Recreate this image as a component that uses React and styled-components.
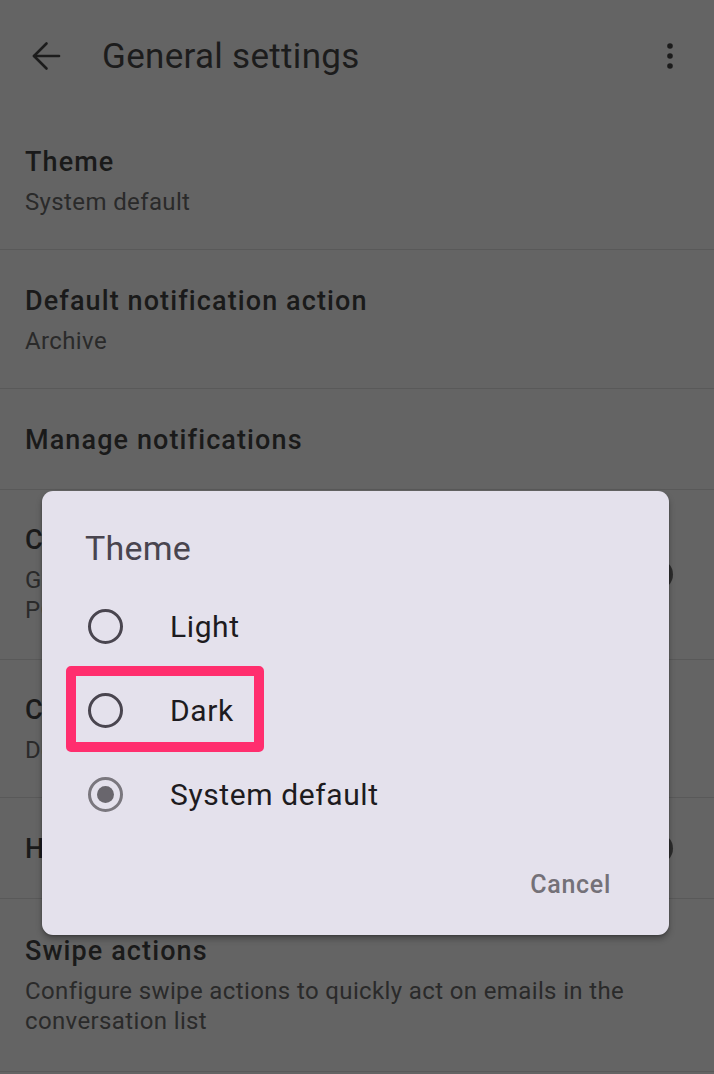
import React from "react";
import styled, { createGlobalStyle } from "styled-components";

const Global = createGlobalStyle`
  html, body { margin: 0; padding: 0; background: #646464; }
  body { font-family: Roboto, "Liberation Sans", sans-serif; -webkit-font-smoothing: antialiased; }
  * { box-sizing: border-box; }
`;

const Page = styled.div`
  position: relative;
  width: 714px;
  height: 1074px;
  background: #646464;
  overflow: hidden;
`;

const TopBar = styled.header`
  height: 112px;
  display: flex;
  align-items: flex-start;
  padding-top: 35px;
`;

const IconButton = styled.button`
  width: 44px;
  height: 44px;
  border: 0;
  background: none;
  padding: 0;
  display: flex;
  align-items: center;
  justify-content: center;
  cursor: pointer;
`;

const BackButton = styled(IconButton)`
  margin-left: 24px;
  margin-top: -1px;
`;

const MenuButton = styled(IconButton)`
  margin-left: auto;
  margin-right: 22px;
  margin-top: -1px;
`;

const BarTitle = styled.h1`
  margin: 0 0 0 34px;
  font-size: 35px;
  line-height: 44px;
  font-weight: 400;
  color: #1c1c1c;
  letter-spacing: 0.3px;
`;

const List = styled.div`
  display: flex;
  flex-direction: column;
`;

const Row = styled.div`
  display: flex;
  align-items: center;
  padding: 33px 38px ${(p) => (p.$tall ? 34 : 32)}px 25px;
  border-bottom: 1px solid #595959;
  min-height: ${(p) => p.$h}px;
`;

const RowText = styled.div`
  flex: 1;
  min-width: 0;
  max-width: ${(p) => p.$max || 640}px;
`;

const RowTitle = styled.div`
  font-size: 27px;
  line-height: 34px;
  font-weight: 500;
  letter-spacing: 1.1px;
  color: #1a1a1a;
`;

const RowSub = styled.div`
  margin-top: 8px;
  font-size: 24px;
  line-height: 30px;
  letter-spacing: 0.37px;
  color: #2a2a2a;
`;

const Switch = styled.div`
  flex: none;
  width: 52px;
  height: 31px;
  border-radius: 16px;
  background: #2c2c2c;
  margin-left: 16px;
`;

const Dialog = styled.div`
  position: absolute;
  left: 42px;
  top: 491px;
  width: 627px;
  height: 444px;
  background: #e4e1ec;
  border-radius: 11px;
  box-shadow: 0 4px 6px rgba(0, 0, 0, 0.28), 0 1px 2px rgba(0, 0, 0, 0.2);
  padding: 36px 0 30px;
  display: flex;
  flex-direction: column;
`;

const DialogTitle = styled.h2`
  margin: 0 0 15px 43px;
  font-size: 34px;
  line-height: 42px;
  font-weight: 400;
  color: #49454f;
  letter-spacing: 0.2px;
`;

const Option = styled.label`
  position: relative;
  height: 84px;
  display: flex;
  align-items: center;
  padding-left: 46px;
  cursor: pointer;
`;

const Radio = styled.span`
  flex: none;
  width: 35px;
  height: 35px;
  border-radius: 50%;
  border: 3px solid ${(p) => (p.$checked ? "#7a777e" : "#49454f")};
  display: flex;
  align-items: center;
  justify-content: center;
  &::after {
    content: "";
    width: 17px;
    height: 17px;
    border-radius: 50%;
    background: #69666d;
    display: ${(p) => (p.$checked ? "block" : "none")};
  }
`;

const OptionText = styled.span`
  margin-left: 47px;
  font-size: 30px;
  letter-spacing: 0.6px;
  color: #1d1b20;
`;

const Highlight = styled.span`
  position: absolute;
  left: 24px;
  top: -2px;
  width: 198px;
  height: 86px;
  border: 10px solid #ff2e6e;
  border-radius: 5px;
  pointer-events: none;
`;

const Actions = styled.div`
  margin-top: auto;
  display: flex;
  justify-content: flex-end;
  padding-right: 44px;
`;

const TextButton = styled.button`
  border: 0;
  background: none;
  font-family: inherit;
  font-size: 25px;
  line-height: 40px;
  font-weight: 500;
  letter-spacing: 0.7px;
  color: #747178;
  padding: 0 14px;
  cursor: pointer;
`;

const rows = [
  { title: "Theme", sub: "System default", h: 138 },
  { title: "Default notification action", sub: "Archive", h: 139 },
  { title: "Manage notifications", h: 101 },
  {
    title: "Conversation view",
    sub: "Group emails with the same topic together for IMAP, POP3 and Exchange",
    h: 170,
    toggle: true,
    tall: true,
  },
  { title: "Conversation list density", sub: "Default", h: 138 },
  { title: "Hide Chat and Meet tabs", h: 101, toggle: true },
  {
    title: "Swipe actions",
    sub: "Configure swipe actions to quickly act on emails in the conversation list",
    h: 173,
    tall: true,
  },
];

const options = [
  { label: "Light" },
  { label: "Dark", highlight: true },
  { label: "System default", checked: true },
];

export default function App() {
  return (
    <Page>
      <Global />
      <TopBar>
        <BackButton aria-label="Back">
          <svg width="30" height="30" viewBox="0 0 30 30" fill="none" stroke="#1c1c1c" strokeWidth="2.6" strokeLinecap="round" strokeLinejoin="round">
            <path d="M28 15H3" />
            <path d="M15.5 2.5L3 15l12.5 12.5" />
          </svg>
        </BackButton>
        <BarTitle>General settings</BarTitle>
        <MenuButton aria-label="More options">
          <svg width="8" height="28" viewBox="0 0 8 28" fill="#1c1c1c">
            <circle cx="4" cy="4" r="2.8" />
            <circle cx="4" cy="14" r="2.8" />
            <circle cx="4" cy="24" r="2.8" />
          </svg>
        </MenuButton>
      </TopBar>
      <List>
        {rows.map((r) => (
          <Row key={r.title} $h={r.h} $tall={r.tall}>
            <RowText $max={r.toggle ? 580 : 640}>
              <RowTitle>{r.title}</RowTitle>
              {r.sub && <RowSub>{r.sub}</RowSub>}
            </RowText>
            {r.toggle && <Switch />}
          </Row>
        ))}
      </List>
      <Dialog role="dialog">
        <DialogTitle>Theme</DialogTitle>
        {options.map((o) => (
          <Option key={o.label}>
            <Radio $checked={o.checked} />
            <OptionText>{o.label}</OptionText>
            {o.highlight && <Highlight />}
          </Option>
        ))}
        <Actions>
          <TextButton>Cancel</TextButton>
        </Actions>
      </Dialog>
    </Page>
  );
}
